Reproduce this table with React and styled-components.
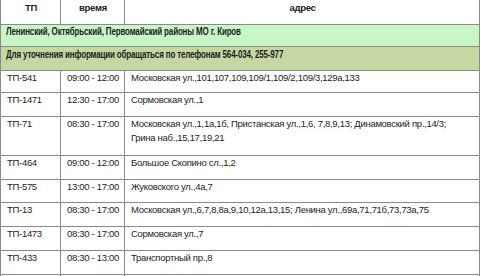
import React from "react";
import styled, { createGlobalStyle } from "styled-components";

const Global = createGlobalStyle`
  html, body { margin: 0; padding: 0; background: #ffffff; }
  body { width: 480px; height: 276px; overflow: hidden; }
`;

const Sheet = styled.div`
  width: 480px;
  box-sizing: border-box;
  border-left: 1px solid #8a8a8a;
  border-right: 1px solid #8a8a8a;
  font-family: "Liberation Sans", Arial, sans-serif;
  font-size: 9.5px;
  letter-spacing: -0.3px;
  color: #1c1c1c;
`;

const Row = styled.div`
  display: grid;
  grid-template-columns: 60px 64px 1fr;
  height: ${(p) => p.$h}px;
  box-sizing: border-box;
  border-bottom: 1px solid #8a8a8a;
  background: #ffffff;
`;

const Cell = styled.div`
  box-sizing: border-box;
  padding: ${(p) => p.$pt ?? 1}px 5px 0 6px;
  line-height: 14px;
  border-right: 1px solid #8a8a8a;
  text-align: ${(p) => (p.$center ? "center" : "left")};
  font-weight: ${(p) => (p.$bold ? 700 : 400)};
  white-space: nowrap;
  overflow: hidden;
  &:last-child { border-right: none; }
`;

const Band = styled.div`
  box-sizing: border-box;
  height: ${(p) => p.$h}px;
  padding: ${(p) => p.$pt}px 5px 0 5px;
  line-height: 14px;
  white-space: nowrap;
  border-bottom: 1px solid #8a8a8a;
  background: ${(p) => p.$bg};
`;

const BandText = styled.span`
  display: inline-block;
  font-size: 10px;
  font-weight: 700;
  letter-spacing: -0.2px;
  transform: scaleX(0.8);
  transform-origin: left center;
`;

const rows = [
  { tp: "ТП-541", time: "09:00 - 12:00", addr: ["Московская ул.,101,107,109,109/1,109/2,109/3,129а,133"], h: 22 },
  { tp: "ТП-1471", time: "12:30 - 17:00", addr: ["Сормовская ул.,1"], h: 24 },
  {
    tp: "ТП-71",
    time: "08:30 - 17:00",
    addr: [
      "Московская ул.,1,1а,1б, Пристанская ул.,1,6, 7,8,9,13; Динамовский пр.,14/3;",
      "Грина наб.,15,17,19,21",
    ],
    h: 39,
  },
  { tp: "ТП-464", time: "09:00 - 12:00", addr: ["Большое Скопино сл.,1,2"], h: 24 },
  { tp: "ТП-575", time: "13:00 - 17:00", addr: ["Жуковского ул.,4а,7"], h: 23 },
  { tp: "ТП-13", time: "08:30 - 17:00", addr: ["Московская ул.,6,7,8,8а,9,10,12а,13,15;  Ленина ул.,69а,71,71б,73,73а,75"], h: 24 },
  { tp: "ТП-1473", time: "08:30 - 17:00", addr: ["Сормовская ул.,7"], h: 24 },
  { tp: "ТП-433", time: "08:30 - 13:00", addr: ["Транспортный пр.,8"], h: 24 },
  { tp: "", time: "", addr: [""], h: 24 },
];

export default function App() {
  return (
    <>
      <Global />
      <Sheet>
        <Row $h={25}>
          <Cell $center $bold $pt={1}>ТП</Cell>
          <Cell $center $bold $pt={1}>время</Cell>
          <Cell $center $bold $pt={1}>адрес</Cell>
        </Row>
        <Band $h={22} $pt={0} $bg="#c9f6c6">
          <BandText>Ленинский, Октябрьский, Первомайский районы МО г. Киров</BandText>
        </Band>
        <Band $h={24} $pt={1} $bg="#c5d8a4">
          <BandText>Для уточнения информации обращаться по телефонам 564-034, 255-977</BandText>
        </Band>
        {rows.map((r, i) => (
          <Row key={i} $h={r.h}>
            <Cell $pt={0}>{r.tp}</Cell>
            <Cell $pt={0}>{r.time}</Cell>
            <Cell $pt={0}>
              {r.addr.map((l, j) => (
                <div key={j}>{l}</div>
              ))}
            </Cell>
          </Row>
        ))}
      </Sheet>
    </>
  );
}
